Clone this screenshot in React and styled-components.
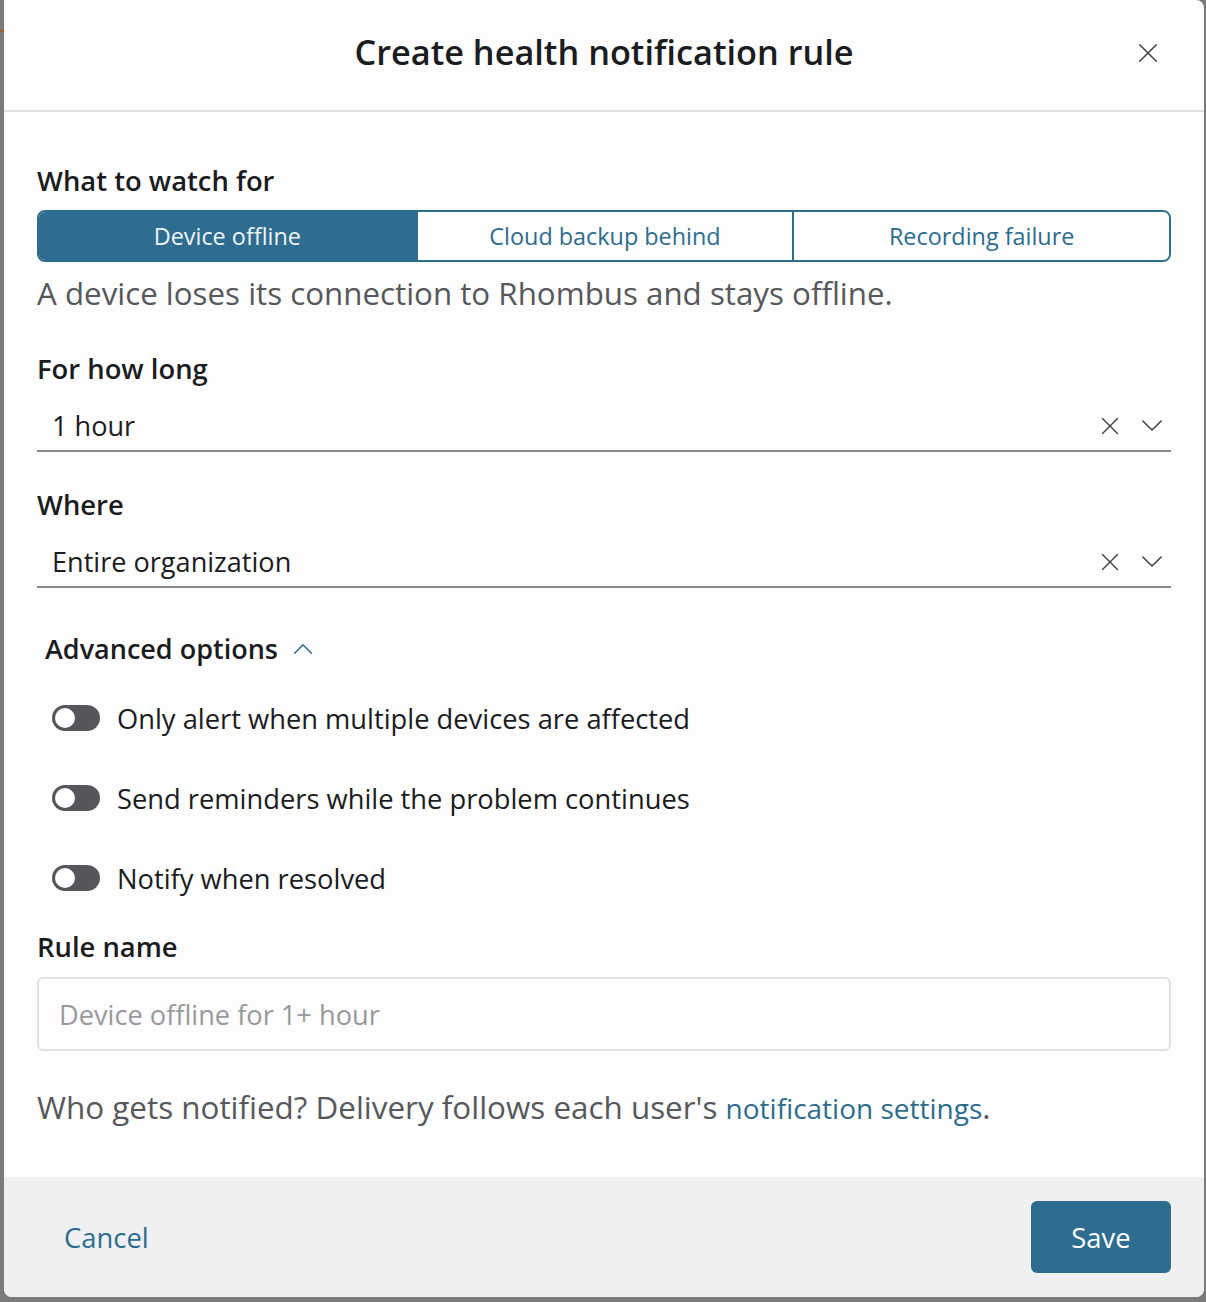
import React from "react";
import styled, { createGlobalStyle } from "styled-components";

const Global = createGlobalStyle`
  html, body { margin: 0; padding: 0; background: #7a7a7a; }
  body { font-family: "Open Sans", "Noto Sans", sans-serif; }
  * { box-sizing: border-box; }
`;

const Stage = styled.div`
  position: relative;
  width: 1206px;
  height: 1302px;
  background: #7b7b7b;
  padding: 0 2px 5px 4px;
  overflow: hidden;
`;

const EdgeMark = styled.div`
  position: absolute;
  left: 0;
  top: 30px;
  width: 4px;
  height: 2px;
  background: #b0602a;
`;

const Modal = styled.div`
  width: 1200px;
  height: 1297px;
  background: #fdfdfe;
  border-radius: 0 8px 8px 8px;
  display: flex;
  flex-direction: column;
  overflow: hidden;
`;

const Header = styled.header`
  height: 112px;
  flex: none;
  border-bottom: 2px solid #e1e2e4;
  display: flex;
  align-items: center;
  justify-content: center;
  position: relative;
`;

const Title = styled.h1`
  margin: -6px 0 0 0;
  font-size: 34.3px;
  line-height: 44px;
  font-weight: 600;
  color: #1b1c1e;
`;

const CloseBtn = styled.button`
  position: absolute;
  right: 44px;
  top: 41px;
  width: 24px;
  height: 24px;
  padding: 0;
  border: none;
  background: transparent;
  display: flex;
  align-items: center;
  justify-content: center;
`;

const Body = styled.div`
  flex: 1;
  padding: 51px 33px 0 33px;
  display: flex;
  flex-direction: column;
`;

const Label = styled.div`
  font-size: 27.4px;
  font-weight: 600;
  color: #1b1c1e;
  line-height: 36px;
  margin-top: ${(p) => p.$mt || 0}px;
`;

const Segments = styled.div`
  margin-top: 11px;
  height: 52px;
  display: grid;
  grid-template-columns: 1fr 1fr 1fr;
  border: 2px solid #2e6c8d;
  border-radius: 8px;
  overflow: hidden;
`;

const Segment = styled.div`
  display: flex;
  align-items: center;
  justify-content: center;
  font-size: 23.4px;
  color: ${(p) => (p.$active ? "#eef3f6" : "#2e6c8d")};
  background: ${(p) => (p.$active ? "#2e6d8f" : "#fdfdfe")};
  & + & {
    border-left: 2px solid #2e6c8d;
  }
`;

const Description = styled.p`
  margin: 11px 0 0 0;
  font-size: 31.3px;
  color: #57585b;
  line-height: 40px;
`;

const SelectRow = styled.div`
  margin-top: 14px;
  height: 51px;
  border-bottom: 2px solid #8a8b8e;
  display: flex;
  align-items: center;
  padding-left: 15px;
  padding-right: 7px;
  gap: 18px;
`;

const SelectValue = styled.div`
  flex: 1;
  font-size: 27.1px;
  line-height: 36px;
  color: #1b1c1e;
`;

const IconSlot = styled.span`
  display: flex;
  width: 24px;
  height: 24px;
  align-items: center;
  justify-content: center;
`;

const Advanced = styled.div`
  margin-top: 43px;
  padding-left: 8px;
  display: flex;
  align-items: center;
  gap: 15px;
  font-size: 27px;
  font-weight: 600;
  color: #1b1c1e;
  line-height: 36px;
`;

const ToggleList = styled.div`
  margin-top: 33px;
  padding-left: 15px;
  display: flex;
  flex-direction: column;
  gap: 44px;
`;

const ToggleRow = styled.div`
  display: flex;
  align-items: center;
  gap: 17px;
  height: 36px;
  font-size: 27.3px;
  color: #1b1c1e;
`;

const Track = styled.span`
  position: relative;
  width: 48px;
  height: 26px;
  border-radius: 13px;
  background: #56575b;
  flex: none;
`;

const Knob = styled.span`
  position: absolute;
  left: 3px;
  top: 3px;
  width: 20px;
  height: 20px;
  border-radius: 50%;
  background: #fff;
`;

const Input = styled.div`
  margin-top: 12px;
  height: 74px;
  border: 2px solid #e1e2e4;
  border-radius: 6px;
  display: flex;
  align-items: center;
  padding-left: 20px;
  font-size: 27.2px;
  color: #98999c;
`;

const Note = styled.p`
  margin: 36px 0 0 0;
  font-size: 31.4px;
  color: #57585b;
  line-height: 40px;
`;

const Link = styled.a`
  color: #2e6c8d;
  font-size: 28px;
  text-decoration: none;
`;

const Footer = styled.footer`
  height: 120px;
  flex: none;
  background: #eff0f2;
  display: flex;
  align-items: center;
  justify-content: space-between;
  padding: 0 33px 0 60px;
`;

const CancelBtn = styled.button`
  border: none;
  background: transparent;
  padding: 0;
  font-family: inherit;
  font-size: 27.4px;
  color: #2e6c8d;
`;

const SaveBtn = styled.button`
  width: 140px;
  height: 72px;
  border: none;
  border-radius: 6px;
  background: #2e6d8f;
  color: #fff;
  font-family: inherit;
  font-size: 27.4px;
`;

const XIcon = ({ size = 22, color = "#3c3d40" }) => (
  <svg width={size} height={size} viewBox="0 0 24 24" fill="none" stroke={color} strokeWidth="1.6" strokeLinecap="round">
    <path d="M3 3 L21 21 M21 3 L3 21" />
  </svg>
);

const Chevron = ({ up, color = "#3c3d40", w = 22, sw = 1.6 }) => (
  <svg width={w} height={w / 2 + 2} viewBox="0 0 24 14" fill="none" stroke={color} strokeWidth={sw} strokeLinecap="round" strokeLinejoin="round">
    <path d={up ? "M2 12 L12 2 L22 12" : "M2 2 L12 12 L22 2"} />
  </svg>
);

const Toggle = ({ children }) => (
  <ToggleRow>
    <Track>
      <Knob />
    </Track>
    {children}
  </ToggleRow>
);

export default function App() {
  return (
    <>
      <Global />
      <Stage>
        <EdgeMark />
        <Modal>
          <Header>
            <Title>Create health notification rule</Title>
            <CloseBtn aria-label="Close">
              <XIcon size={22} />
            </CloseBtn>
          </Header>
          <Body>
            <Label>What to watch for</Label>
            <Segments>
              <Segment $active>Device offline</Segment>
              <Segment>Cloud backup behind</Segment>
              <Segment>Recording failure</Segment>
            </Segments>
            <Description>A device loses its connection to Rhombus and stays offline.</Description>

            <Label $mt={38}>For how long</Label>
            <SelectRow>
              <SelectValue>1 hour</SelectValue>
              <IconSlot><XIcon size={20} /></IconSlot>
              <IconSlot><Chevron w={22} /></IconSlot>
            </SelectRow>

            <Label $mt={35}>Where</Label>
            <SelectRow>
              <SelectValue>Entire organization</SelectValue>
              <IconSlot><XIcon size={20} /></IconSlot>
              <IconSlot><Chevron w={22} /></IconSlot>
            </SelectRow>

            <Advanced>
              Advanced options
              <Chevron up color="#2e6c8d" w={20} sw={1.8} />
            </Advanced>

            <ToggleList>
              <Toggle>Only alert when multiple devices are affected</Toggle>
              <Toggle>Send reminders while the problem continues</Toggle>
              <Toggle>Notify when resolved</Toggle>
            </ToggleList>

            <Label $mt={33}>Rule name</Label>
            <Input>Device offline for 1+ hour</Input>

            <Note>
              Who gets notified? Delivery follows each user's <Link href="#">notification settings</Link>.
            </Note>
          </Body>
          <Footer>
            <CancelBtn>Cancel</CancelBtn>
            <SaveBtn>Save</SaveBtn>
          </Footer>
        </Modal>
      </Stage>
    </>
  );
}
